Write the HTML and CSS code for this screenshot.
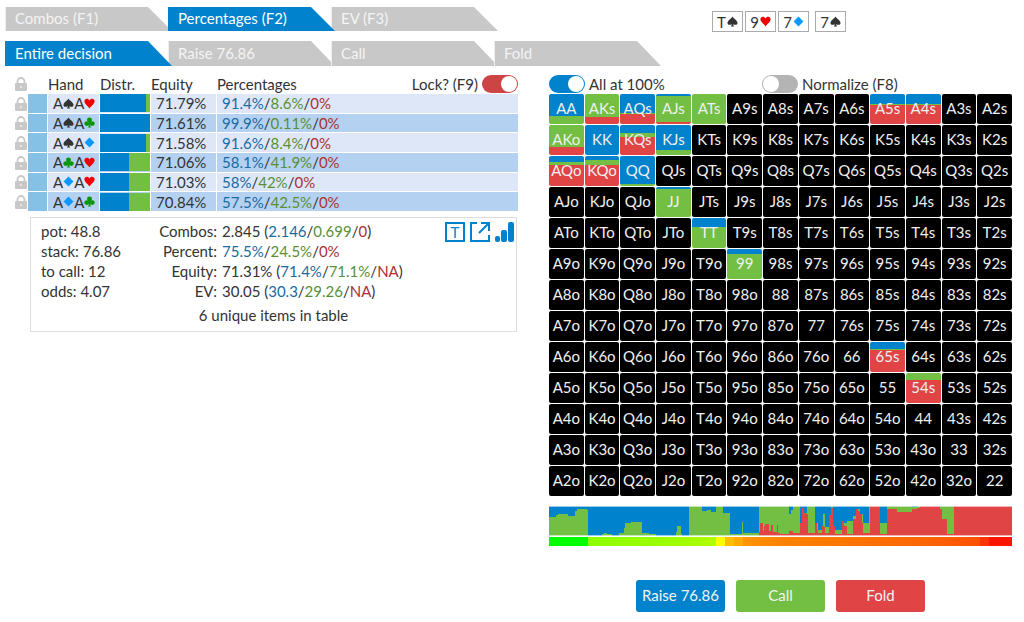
FILE: index.html
```html
<!DOCTYPE html>
<html lang="en">
<head>
<meta charset="utf-8">
<title>Decision ranges</title>
<link rel="stylesheet" href="styles.css">
</head>
<body>
<svg class="symbols" aria-hidden="true">
  <symbol id="spade" viewBox="0 0 12 12"><path d="M6 .5C7 2.500 11.500 5 11.500 7.500C11.500 9.900 8.200 10.200 6.900 8.600L7.200 10.800L8.300 11.500H3.700L4.800 10.800L5.100 8.600C3.800 10.200.5 9.900.5 7.500C.5 5 5 2.500 6 .5Z"/></symbol>
  <symbol id="heart" viewBox="0 0 12 12"><path d="M6 11.500C5 9.200.4 6.800.4 3.600C.4.4 4.700-.1 6 2.800C7.300-.1 11.600.4 11.600 3.600C11.600 6.800 7 9.200 6 11.500Z"/></symbol>
  <symbol id="diamond" viewBox="0 0 12 12"><path d="M6 .6L11.400 6L6 11.400L.6 6Z"/></symbol>
  <symbol id="club" viewBox="0 0 12 12"><circle cx="6" cy="3.200" r="2.700"/><circle cx="3" cy="7.200" r="2.700"/><circle cx="9" cy="7.200" r="2.700"/><path d="M5 4H7L6.900 9L7.200 10.800L8.300 11.500H3.700L4.800 10.800L5.100 9Z"/></symbol>
  <symbol id="lock" viewBox="0 0 12 14"><path d="M2.500 7V4.500a3.500 3.500 0 0 1 7 0V7" fill="none" stroke="currentColor" stroke-width="1.800"/><rect y="6" width="12" height="8" rx="1" fill="currentColor"/><rect x="5.500" y="9" width="1" height="2" fill="#fff"/></symbol>
</svg>

<header class="header">
  <nav class="tabs">
    <div class="tab-row">
      <button class="tab">Combos (F1)</button>
      <button class="tab active">Percentages (F2)</button>
      <button class="tab">EV (F3)</button>
    </div>
    <div class="tab-row">
      <button class="tab active">Entire decision</button>
      <button class="tab">Raise 76.86</button>
      <button class="tab">Call</button>
      <button class="tab">Fold</button>
    </div>
  </nav>
  <div class="board">
    <span class="card">T<svg class="suit spade"><use href="#spade"/></svg></span>
    <span class="card">9<svg class="suit heart"><use href="#heart"/></svg></span>
    <span class="card">7<svg class="suit diamond"><use href="#diamond"/></svg></span>
    <span class="card river">7<svg class="suit spade"><use href="#spade"/></svg></span>
  </div>
</header>

<main class="panels">
  <section class="left">
    <table class="hands">
      <colgroup><col class="c-lock"><col class="c-weight"><col class="c-hand"><col class="c-distr"><col class="c-equity"><col></colgroup>
      <thead>
        <tr>
          <th class="lock"><svg class="lock-icon"><use href="#lock"/></svg></th><th></th><th>Hand</th><th>Distr.</th><th>Equity</th>
          <th><div class="last-head"><span>Percentages</span><label class="switch-label">Lock? (F9)<input class="switch danger" type="checkbox" checked></label></div></th>
        </tr>
      </thead>
      <tbody id="hands"></tbody>
    </table>

    <div class="summary">
      <div class="facts">
        <div>pot: 48.8</div>
        <div>stack: 76.86</div>
        <div>to call: 12</div>
        <div>odds: 4.07</div>
      </div>
      <dl class="stats">
        <dt>Combos:</dt><dd>2.845 (<span class="raise">2.146</span>/<span class="call">0.699</span>/<span class="fold">0</span>)</dd>
        <dt>Percent:</dt><dd><span class="raise">75.5%</span>/<span class="call">24.5%</span>/<span class="fold">0%</span></dd>
        <dt>Equity:</dt><dd>71.31% (<span class="raise">71.4%</span>/<span class="call">71.1%</span>/<span class="fold">NA</span>)</dd>
        <dt>EV:</dt><dd>30.05 (<span class="raise">30.3</span>/<span class="call">29.26</span>/<span class="fold">NA</span>)</dd>
      </dl>
      <div class="tools">
        <button class="tool boxed" aria-label="Text view">T</button>
        <button class="tool" aria-label="Open in window"><svg viewBox="0 0 20 20"><path d="M7 1H1V19H19V13M11 1H19V9M18 2L9 11" fill="none" stroke="#0082cc" stroke-width="2"/></svg></button>
        <button class="tool" aria-label="Chart"><svg viewBox="0 0 20 20" fill="#0082cc"><rect x="0" y="14" width="5" height="6" rx="2"/><rect x="6" y="8" width="6" height="12" rx="2"/><rect x="13" y="0" width="6" height="20" rx="2"/></svg></button>
      </div>
      <div class="count">6 unique items in table</div>
    </div>
  </section>

  <section class="right">
    <div class="options">
      <label class="switch-label"><input class="switch" type="checkbox" checked>All at 100%</label>
      <label class="switch-label"><input class="switch" type="checkbox">Normalize (F8)</label>
    </div>
    <div class="matrix" id="matrix"></div>
    <svg class="chart" viewBox="0 0 463 30" preserveAspectRatio="none" role="img" aria-label="Action distribution">
      <rect width="463" height="30" fill="#0082cc"/>
      <path fill="#72bf44" d="M0 30V11H7V9H9V8H19V10H26V5H28V3H38V4H39V30H53V28H55V27H58V28H63V30H70V27H75V22H76V17H82V16H93V27H100V28H107V30H127V26H128V20H132V28H133V30H140V0H153V5H158V4H162V6H167V0H174V7H181V28H193V16H194V27H210V0H240V8H242V4H244V0H251V17H253V7H258V0H266V17H269V24H274V8H276V21H280V9H282V1H284V21H286V24H293V17H298V15H304V10H307V3H311V8H314V17H320V0H331V17H338V0H363V1H368V0H463V30Z"/>
      <path fill="#e04444" d="M210 30V26H211V17H214V25H215V20H216V18H220V25H222V19H224V26H228V19H229V27H231V28H240V25H244V27H251V17H253V2H255V7H257V8H259V27H266V17H268V24H269V27H273V20H275V21H276V27H280V9H282V2H284V20H286V28H293V15H295V20H298V28H304V13H307V3H309V5H311V8H313V17H314V27H321V0H331V28H338V3H348V6H363V3H368V2H371V0H391V3H393V13H398V28H405V0H463V30Z"/>
      <path d="M0 .5H463M0 29.500H463" stroke="#fff" stroke-opacity=".6"/>
    </svg>
    <div class="heat"></div>
    <div class="actions">
      <button class="action act-raise">Raise 76.86</button>
      <button class="action act-call">Call</button>
      <button class="action act-fold">Fold</button>
    </div>
  </section>
</main>
<script src="script.js"></script>
</body>
</html>
```
FILE: styles.css
```css
* { box-sizing: border-box; }
body { margin: 0; background: #fff; color: #333; font: 15px/20px Lato, "Noto Sans", sans-serif; }
button { font: inherit; border: 0; padding: 0 0 2px; margin: 0; cursor: pointer; }
.symbols { position: absolute; width: 0; height: 0; }

.header { display: flex; gap: 51px; padding: 7px 12px 0 5px; }
.tabs { display: flex; flex-direction: column; gap: 10px; width: 656px; }
.tab-row { display: flex; isolation: isolate; }
.tab {
  width: 167px; height: 25px; margin-right: -4px; padding: 0 0 2px 9px;
  text-align: left; color: #f4f4f4; background: #c8c8c8; border-left: 1px solid #eee;
  clip-path: polygon(0 0, calc(100% - 24px) 0, 100% 100%, 0 100%);
}
.tab.active { position: relative; z-index: 1; background: #0082cc; border-color: #0082cc; color: #fff; }
.tab-row:first-child .tab { height: 24px; }

.board { display: flex; gap: 2px; padding-top: 4px; }
.card { display: flex; align-items: center; justify-content: center; gap: 1px; width: 31px; height: 21px; border: 1px solid #aaa; line-height: 18px; }
.card.river { margin-left: 4px; }
.suit { width: 11px; height: 11px; flex: none; }
.spade { fill: #333; }
.heart { fill: #f00000; }
.diamond { fill: #0d99ff; }
.club { fill: #0a960a; }

.panels { display: grid; grid-template-columns: 513fr 463fr; column-gap: 31px; padding: 8px 12px 0 5px; }

.hands { width: 100%; height: 138px; border-collapse: separate; border-spacing: 0; table-layout: fixed; line-height: 18px; }
.c-lock { width: 23px; }
.c-weight { width: 20px; }
.c-hand { width: 52px; }
.c-distr { width: 51px; }
.c-equity { width: 66px; }
.hands th { height: 20px; padding: 0; font-weight: 400; text-align: left; vertical-align: middle; }
.hands td { padding: 0; border: 0 solid #fff; border-width: 0 1px 1px 0; background: #dde7f7; }
.hands tbody tr:nth-child(even) td { background: #b5d1f1; }
.hands .lock, .hands tbody tr:nth-child(n) .lock { padding: 0 0 0 10px; background: #fff; color: #c8c8c8; border: 0; }
.lock-icon { display: block; width: 12px; height: 14px; }
.hands tbody tr:nth-child(n) .weight { background: #85c1e7; }
.hands .hand { padding-left: 5px; }
.hand-cards { display: flex; align-items: center; }
.hands .equity, .hands .split { padding-left: 5px; }
.hands .split { border-right: 0; }
.distr-bar { display: flex; height: 18px; background: #72bf44; }
.distr-bar span { background: #0082cc; }
.last-head { display: flex; justify-content: space-between; }

.switch-label { display: flex; align-items: center; gap: 4px; line-height: 18px; }
.switch { appearance: none; display: flex; width: 36px; height: 18px; margin: 0; padding: 1px; border-radius: 9px; background: #b4b4b4; }
.switch::before { content: ""; width: 16px; height: 16px; border-radius: 8px; background: #fff; }
.switch:checked { justify-content: flex-end; background: #0082cc; }
.switch.danger:checked { background: #c44; }

.raise { color: #1a6ba0; }
.call { color: #5a8f35; }
.fold { color: #a83232; }

.summary {
  display: grid; grid-template-columns: 92px auto 1fr; column-gap: 10px;
  margin: 5px 1px 0 25px; padding: 3px 1px 6px 10px; border: 1px solid #ddd;
}
.stats { display: grid; grid-template-columns: 74px auto; column-gap: 5px; margin: 0; }
.stats dt { text-align: right; }
.stats dd { margin: 0; }
.tools { display: flex; justify-content: flex-end; gap: 5px; padding-top: 1px; }
.tool { width: 20px; height: 20px; padding: 0; background: none; color: #0082cc; line-height: 16px; }
.tool svg { display: block; }
.tool.boxed { border: 2px solid #0082cc; }
.count { grid-column: 1 / -1; padding: 4px 9px 0 0; text-align: center; }

.options { display: grid; grid-template-columns: 213fr 250fr; height: 20px; }
.matrix { display: grid; grid-template-columns: repeat(13, 1fr); gap: 1px; }
.cell { min-width: 0; height: 30px; border-radius: 2px; background: #000; color: #f0f0f0; }
.chart { display: block; width: 100%; height: 30px; margin-top: 10px; }
.heat {
  height: 9px; margin-top: 1px;
  background: linear-gradient(90deg, #0f0 0 39px, #8cff00 39px, #a0ff00 29%, #b4ff00 36%, #ff0 36% 38%, #ffbe00 38% 40%, #ffaa00 40% 42%, #ff9600 42%, #ff8200 50%, #ff6400 82%, #ff5000 93%, #ff3200 93% 95%, #ff1400 95%);
}
.actions { display: flex; justify-content: center; gap: 11px; margin-top: 34px; }
.action { width: 89px; height: 32px; border-radius: 3px; color: #f4f4f4; }
.act-raise { background: #0082cc; }
.act-call { background: #72bf44; }
.act-fold { background: #e04444; }
```
FILE: script.js
```js
const suits = { s: "spade", h: "heart", d: "diamond", c: "club" };
const hands = [
  ["sh", "71.79%", ["91.4%", "8.6%", "0%"]],
  ["sc", "71.61%", ["99.9%", "0.11%", "0%"]],
  ["sd", "71.58%", ["91.6%", "8.4%", "0%"]],
  ["ch", "71.06%", ["58.1%", "41.9%", "0%"]],
  ["dh", "71.03%", ["58%", "42%", "0%"]],
  ["dc", "70.84%", ["57.5%", "42.5%", "0%"]]
];
const card = s => `A<svg class="suit ${suits[s]}"><use href="#${suits[s]}"/></svg>`;
document.getElementById("hands").innerHTML = hands.map(([cards, equity, p]) => `<tr>
  <td class="lock"><svg class="lock-icon"><use href="#lock"/></svg></td><td class="weight"></td>
  <td class="hand"><div class="hand-cards">${[...cards].map(card).join("")}</div></td>
  <td><div class="distr-bar"><span style="width:${p[0]}"></span></div></td>
  <td class="equity">${equity}</td>
  <td class="split"><span class="raise">${p[0]}</span>/<span class="call">${p[1]}</span>/<span class="fold">${p[2]}</span></td></tr>`).join("");

// Cumulative percentages: end of the raise share, end of the call share; the rest folds.
const mix = {
  AA: [74, 100], AKs: [0, 77], AQs: [63, 66], AJs: [6, 93], ATs: [0, 100], A5s: [35, 38], A4s: [35, 38],
  AKo: [0, 73], KK: [100, 100], KQs: [28, 40], KJs: [82, 100],
  AQo: [19, 31], KQo: [14, 31], QQ: [93, 100], JJ: [8, 100], TT: [30, 100], 99: [18, 100],
  "65s": [25, 28], "54s": [0, 23]
};
const ranks = "AKQJT98765432";
let cells = "";
for (let r = 0; r < 13; r++) {
  for (let c = 0; c < 13; c++) {
    const name = ranks[Math.min(r, c)] + ranks[Math.max(r, c)] + (r === c ? "" : r < c ? "s" : "o");
    const m = mix[name];
    const fill = m ? ` style="background:linear-gradient(#0082cc ${m[0]}%, #72bf44 ${m[0]}% ${m[1]}%, #e04444 ${m[1]}%)"` : "";
    cells += `<button class="cell"${fill}>${name}</button>`;
  }
}
document.getElementById("matrix").innerHTML = cells;
```
